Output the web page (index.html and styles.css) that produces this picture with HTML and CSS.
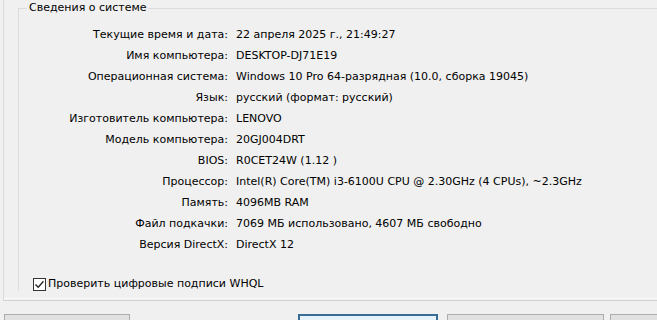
FILE: index.html
```html
<!DOCTYPE html>
<html lang="ru">
<head>
    <meta charset="UTF-8">
    <title>Средство диагностики DirectX</title>
    <link rel="stylesheet" href="styles.css">
</head>
<body>
    <div class="pane">
        <fieldset class="group">
            <legend>Сведения о системе</legend>
            <div class="info">
                <div class="label">Текущие время и дата:</div>
                <div class="value">22 апреля 2025 г., 21:49:27</div>
                <div class="label">Имя компьютера:</div>
                <div class="value">DESKTOP-DJ71E19</div>
                <div class="label">Операционная система:</div>
                <div class="value">Windows 10 Pro 64-разрядная (10.0, сборка 19045)</div>
                <div class="label">Язык:</div>
                <div class="value">русский (формат: русский)</div>
                <div class="label">Изготовитель компьютера:</div>
                <div class="value">LENOVO</div>
                <div class="label">Модель компьютера:</div>
                <div class="value">20GJ004DRT</div>
                <div class="label">BIOS:</div>
                <div class="value">R0CET24W (1.12 )</div>
                <div class="label">Процессор:</div>
                <div class="value">Intel(R) Core(TM) i3-6100U CPU @ 2.30GHz (4 CPUs), ~2.3GHz</div>
                <div class="label">Память:</div>
                <div class="value">4096MB RAM</div>
                <div class="label">Файл подкачки:</div>
                <div class="value">7069 МБ использовано, 4607 МБ свободно</div>
                <div class="label">Версия DirectX:</div>
                <div class="value">DirectX 12</div>
            </div>
            <label class="check">
                <span class="box">
                    <svg width="11" height="11" viewBox="0 0 11 11">
                        <path d="M1.5 5.5 L4.2 8.3 L9.5 2.2" fill="none" stroke="#222" stroke-width="1.3"/>
                    </svg>
                </span>
                Проверить цифровые подписи WHQL
            </label>
        </fieldset>
    </div>

    <div class="buttons">
        <div class="btn btn-help" title="Справка"></div>
        <div class="btn btn-default" title="Следующая страница"></div>
        <div class="btn btn-save" title="Сохранить все сведения..."></div>
        <div class="btn btn-exit" title="Выход"></div>
    </div>
</body>
</html>
```

FILE: styles.css
```css
body {
    margin: 0;
    background: #f0f0f0;
    font-family: 'DejaVu Sans', Tahoma, sans-serif;
    font-size: 11px;
    color: #000;
}

.pane {
    margin-left: 3px;
    padding: 8px 0 0 14px;
    height: 301px;
    box-sizing: border-box;
    border-left: 1px solid #dadada;
    border-bottom: 1px solid #d2d2d2;
    box-shadow: inset 0 -1px 0 #f0f0f0, inset 0 -2px 0 #fbfbfb;
}

.group {
    margin: 0;
    padding: 0;
    height: 283px;
    border: 1px solid #dcdcdc;
    border-right: none;
    border-bottom: none;
    box-sizing: border-box;
    position: relative;
}

.group legend {
    margin-left: 8px;
    padding: 0 2px;
    line-height: 14px;
    position: absolute;
    top: -8px;
    background: #f0f0f0;
}

.info {
    display: grid;
    grid-template-columns: 209px 1fr;
    column-gap: 8px;
    margin-top: 15px;
    line-height: 21px;
}

.label {
    text-align: right;
    white-space: nowrap;
}

.value {
    white-space: nowrap;
}

.check {
    display: flex;
    align-items: center;
    gap: 2px;
    margin: 22px 0 0 14px;
    line-height: 14px;
}

.box {
    width: 11px;
    height: 11px;
    border: 1px solid #333;
    background: #fff;
    display: flex;
}

.buttons {
    display: flex;
    height: 6px;
    margin-top: 13px;
    padding-left: 4px;
    overflow: hidden;
}

.btn {
    flex: none;
    height: 23px;
    box-sizing: border-box;
    background: #e1e1e1;
    border: 1px solid #adadad;
}

.btn-help {
    width: 126px;
}

.btn-default {
    width: 140px;
    margin-left: 168px;
    background: #e5f1fb;
    border: 2px solid #3a6d96;
}

.btn-save {
    width: 157px;
    margin-left: 9px;
}

.btn-exit {
    width: 80px;
    margin-left: 6px;
}
```
